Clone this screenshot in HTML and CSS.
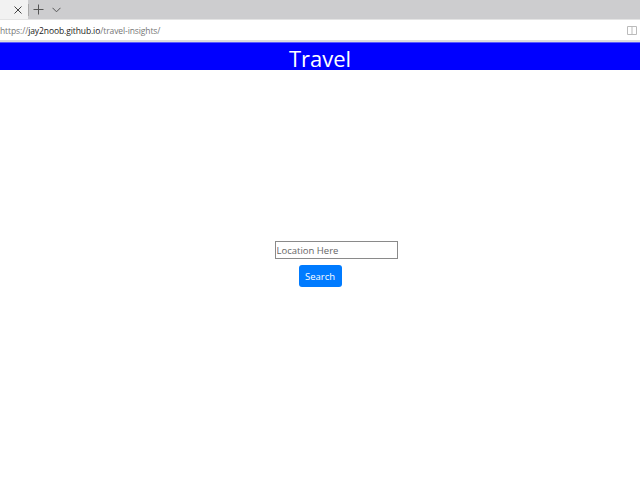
FILE: index.html
```html
<!DOCTYPE html>
<html>
<head>
<meta charset="utf-8">
<link rel="stylesheet" href="styles.css">
</head>
<body>
<div class="tabbar">
  <div class="tab"><svg class="close" width="8" height="8" viewBox="0 0 8 8"><path d="M0.5 0.5L7.5 7.5M7.5 0.5L0.5 7.5" stroke="#444" stroke-width="1" fill="none"/></svg></div>
  <div class="tabtools">
    <svg class="plus" width="11" height="11" viewBox="0 0 11 11"><path d="M5.5 0.5v10M0.5 5.5h10" stroke="#555" stroke-width="1" fill="none"/></svg>
    <svg class="chev" width="9" height="6" viewBox="0 0 9 6"><path d="M0.5 0.8L4.5 4.8L8.5 0.8" stroke="#555" stroke-width="1" fill="none"/></svg>
  </div>
</div>
<div class="addrbar">
  <div class="url">https://<span class="host">jay2noob.github.io</span>/travel-insights/</div>
  <svg class="reader" width="10" height="9" viewBox="0 0 10 9"><path d="M0.5 0.5h9v8h-9zM5 0.5v8" stroke="#bbb" stroke-width="1" fill="none"/></svg>
</div>
<header class="header">Travel</header>
<main class="main">
  <input class="loc" type="text" placeholder="Location Here">
  <button class="btn">Search</button>
</main>
</body>
</html>
```
FILE: styles.css
```css
html, body { margin: 0; padding: 0; background: #fff; }
body { font-family: "Open Sans", "Noto Sans", sans-serif; width: 640px; height: 480px; overflow: hidden; }
.tabbar { height: 19px; background: #cdcdcf; display: flex; align-items: stretch; }
.tab { width: 28px; background: #f2f2f2; display: flex; align-items: center; justify-content: flex-end; box-sizing: border-box; }
.close { margin-right: 6px; }
.tabtools { display: flex; align-items: center; border-left: 1px solid #aaa; padding-left: 4px; height: 12px; align-self: center; }
.chev { margin-left: 8px; }
.addrbar { border-top: 1px solid #e4e4e4; border-bottom: 2px solid #dcdcdc; background: #fff; display: flex; align-items: center; justify-content: space-between; box-sizing: border-box; height: 23px; }
.url { font-size: 8.5px; color: #777; margin-left: 0; white-space: nowrap; letter-spacing: -0.1px; }
.host { color: #222; }
.reader { margin-right: 3px; }
.header { background: #0000ff; color: #fff; height: 27px; text-align: center; font-size: 22px; line-height: 30px; border-top: 1px solid #5a5aff; }
.main { display: flex; flex-direction: column; align-items: center; padding-top: 171px; }
.loc { width: 123px; height: 18px; box-sizing: border-box; border: 1px solid #8a8a8a; margin-left: 32px; font-family: "Open Sans", sans-serif; font-size: 9.5px; padding: 0 1px; color: #333; outline: none; }
.loc::placeholder { color: #666; }
.btn { margin-top: 6px; width: 43px; height: 22px; background: #007bff; color: #fff; border: none; border-radius: 3px; font-family: "Open Sans", sans-serif; font-size: 9.5px; padding: 0; }
```
